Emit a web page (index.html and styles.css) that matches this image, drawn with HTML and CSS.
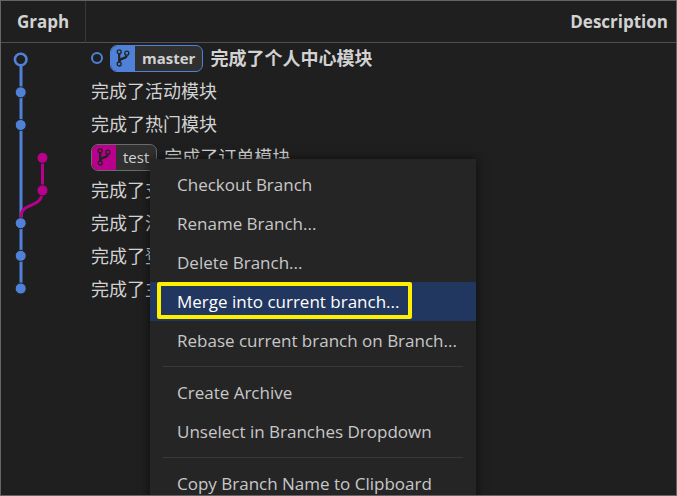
FILE: index.html
```html
<!DOCTYPE html>
<html lang="zh-CN">
<head>
<meta charset="utf-8">
<title>Git Graph</title>
<link rel="stylesheet" href="styles.css">
</head>
<body>
<svg class="defs" aria-hidden="true">
  <symbol id="branch" viewBox="0 0 14 18">
    <g fill="none" stroke="#222" stroke-width="1.3">
      <circle cx="3.2" cy="2.8" r="2"/>
      <circle cx="3.2" cy="15" r="2"/>
      <circle cx="10.8" cy="4.2" r="2"/>
    </g>
    <path d="M3.2 5v8M10.6 6.4C10.6 10.4 3.4 8.4 3.4 12.8" fill="none" stroke="#222" stroke-width="2.2"/>
  </symbol>
</svg>
<main class="frame">
  <table class="commits">
    <thead>
      <tr><th class="graph-head" scope="col">Graph</th><th class="desc-head" scope="col">Description</th></tr>
    </thead>
    <tbody>
      <tr>
        <td class="graph" rowspan="8">
          <svg width="84" height="262" viewBox="1 43 84 262" role="img" aria-label="Commit graph">
            <g fill="none" stroke-width="3">
              <path d="M21 59V288" stroke="#4f81d8"/>
              <path d="M42.500 158V190C42.500 210 21 201 21 217" stroke="#b9008c"/>
            </g>
            <g stroke="#1f1f1f" stroke-width="1" fill="#4f81d8">
              <circle cx="20.700" cy="92.300" r="5.500"/>
              <circle cx="20.700" cy="125" r="5.500"/>
              <circle cx="20.700" cy="223.200" r="5.500"/>
              <circle cx="20.700" cy="255.800" r="5.500"/>
              <circle cx="20.700" cy="288.500" r="5.500"/>
            </g>
            <g stroke="#1f1f1f" stroke-width="1" fill="#b9008c">
              <circle cx="42.500" cy="157.800" r="5.500"/>
              <circle cx="42.500" cy="190.400" r="5.500"/>
            </g>
            <circle cx="20.700" cy="59.500" r="5.800" fill="#1f1f1f" stroke="#4f81d8" stroke-width="2.600"/>
          </svg>
        </td>
        <td class="desc"><div class="line current"><span class="head-dot"></span><span class="ref blue"><span class="ref-icon"><svg width="14" height="18"><use href="#branch"/></svg></span><span class="ref-name">master</span></span><span>完成了个人中心模块</span></div></td>
      </tr>
      <tr><td class="desc">完成了活动模块</td></tr>
      <tr><td class="desc">完成了热门模块</td></tr>
      <tr><td class="desc"><div class="line"><span class="ref pink"><span class="ref-icon"><svg width="14" height="18"><use href="#branch"/></svg></span><span class="ref-name">test</span></span><span>完成了订单模块</span></div></td></tr>
      <tr><td class="desc">完成了支</td></tr>
      <tr><td class="desc">完成了注</td></tr>
      <tr><td class="desc">完成了登</td></tr>
      <tr><td class="desc">完成了主</td></tr>
    </tbody>
  </table>
  <div class="menu" role="menu">
    <button class="item" role="menuitem">Checkout Branch</button>
    <button class="item" role="menuitem">Rename Branch...</button>
    <button class="item" role="menuitem">Delete Branch...</button>
    <button class="item active" role="menuitem">Merge into current branch...</button>
    <button class="item" role="menuitem">Rebase current branch on Branch...</button>
    <hr class="divider">
    <button class="item" role="menuitem">Create Archive</button>
    <button class="item" role="menuitem">Unselect in Branches Dropdown</button>
    <hr class="divider">
    <button class="item" role="menuitem">Copy Branch Name to Clipboard</button>
  </div>
</main>
</body>
</html>
```
FILE: styles.css
```css
* { box-sizing: border-box; }

body {
  margin: 0;
  background: #1f1f1f;
  color: #d2d2d2;
  font: 18px/24px "Open Sans", "Noto Sans CJK SC", sans-serif;
}

.defs { display: none; }

.frame {
  position: relative;
  height: 100vh;
  overflow: hidden;
  border: 1px solid #646464;
}

.commits {
  width: 100%;
  border-collapse: separate;
  border-spacing: 0;
}

th {
  height: 42px;
  padding: 0 8px;
  border-bottom: 1px solid #505050;
  font-size: 17px;
  font-weight: 700;
}

.graph-head {
  width: 85px;
  border-right: 1px solid #383838;
}

.desc-head { text-align: right; }

td { padding: 0; }

.graph { vertical-align: top; }
.graph svg { display: block; }

.desc {
  height: 33px;
  padding: 0 0 3px 5px;
  vertical-align: middle;
  white-space: nowrap;
}

.line {
  display: flex;
  align-items: center;
  gap: 7px;
}

.current { font-weight: 700; }

.head-dot {
  width: 12px;
  height: 12px;
  border: 2px solid #4f81d8;
  border-radius: 50%;
}

.ref {
  display: flex;
  height: 27px;
  overflow: hidden;
  border: 1px solid #6a6a6a;
  border-radius: 7px;
  background: #303030;
  font-size: 15px;
  line-height: 25px;
}

.ref-icon {
  display: flex;
  align-items: center;
  justify-content: center;
  width: 24px;
}

.ref-name { padding: 0 7px; }

.blue { border-color: #4f81d8; }
.blue .ref-icon { background: #4f81d8; }
.pink .ref-icon { background: #b9008c; }

.menu {
  position: absolute;
  top: 158px;
  left: 149px;
  width: 326px;
  padding: 6px 0;
  background: #252526;
  box-shadow: 0 0 10px #000000a0;
}

.item {
  display: block;
  width: 100%;
  height: 39px;
  padding: 0 27px;
  border: 0;
  background: none;
  color: #c8c8c8;
  font: inherit;
  font-size: 17px;
  text-align: left;
  white-space: nowrap;
}

.active {
  position: relative;
  background: #22375f;
  color: #fff;
}

.active::after {
  content: "";
  position: absolute;
  inset: 0 64px 2px 7px;
  border: 4px solid #fff000;
  border-radius: 2px;
}

.divider {
  height: 1px;
  margin: 6px 13px;
  border: 0;
  background: #383838;
}
```
